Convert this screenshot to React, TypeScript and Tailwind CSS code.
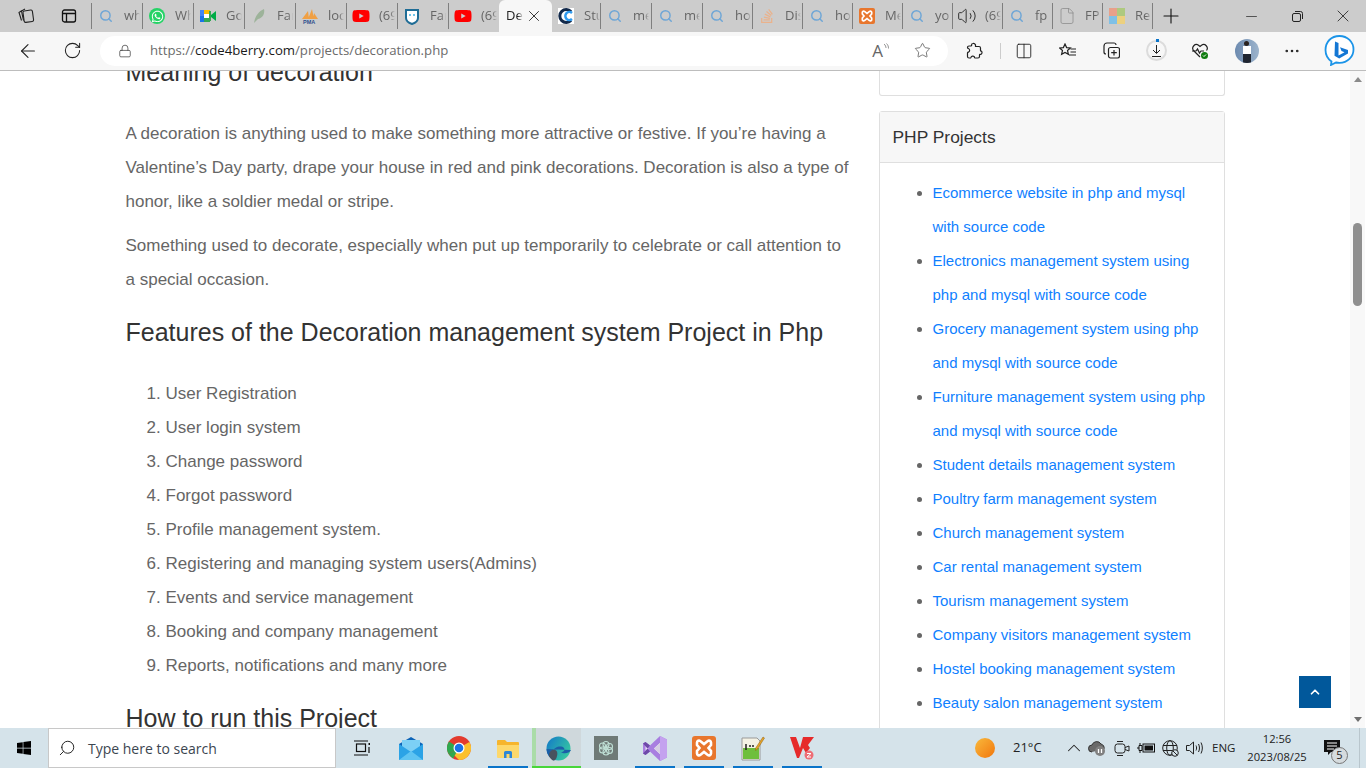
import { ReactNode } from "react";
import {
  ArrowLeft,
  ChevronUp,
  Columns2,
  File,
  Lock,
  Minus,
  MoreHorizontal,
  Plus,
  RotateCw,
  Search,
  Star,
  Volume2,
  X,
} from "lucide-react";
import { FaStackOverflow, FaWhatsapp, FaYoutube, FaWindows } from "react-icons/fa";

const SearchFav = () => <Search className="h-[14px] w-[14px] text-[#6ea6d6]" strokeWidth={2.5} />;
const YouTubeFav = () => <FaYoutube className="h-[18px] w-[18px] text-[#f00]" />;

const XamppGlyph = ({ size = 16 }: { size?: number }) => (
  <svg width={size} height={size} viewBox="0 0 24 24">
    <rect width="24" height="24" rx="3" fill="#e8762d" />
    <path
      d="M5 6.5a2 2 0 0 1 3.2-1.5L12 8l3.8-3a2 2 0 0 1 3.2 1.5V9l-2.500 3 2.500 3v2.500a2 2 0 0 1-3.200 1.500L12 16l-3.800 3A2 2 0 0 1 5 17.500V15l2.500-3L5 9Z"
      fill="none"
      stroke="#fff"
      strokeWidth="2.600"
    />
  </svg>
);

const tabs: { label: string; icon: ReactNode; w: string }[] = [
  { label: "wh", icon: <SearchFav />, w: "w-[51px]" },
  { label: "Wh", icon: <span className="flex h-[16px] w-[16px] items-center justify-center rounded-full bg-[#25d366]"><FaWhatsapp className="h-[13px] w-[13px] text-white" /></span>, w: "w-[51px]" },
  {
    label: "Go",
    icon: (
      <svg width="16" height="14" viewBox="0 0 16 14">
        <rect x="0" y="1" width="5" height="6" fill="#4285f4" />
        <rect x="0" y="7" width="5" height="6" fill="#1a73e8" />
        <rect x="4" y="1" width="6" height="4" fill="#fbbc04" />
        <rect x="4" y="9" width="6" height="4" fill="#34a853" />
        <rect x="9" y="2" width="2" height="10" fill="#34a853" />
        <path d="M11 6 16 2v10l-5-4Z" fill="#00ac47" />
        <rect x="4" y="5" width="5" height="4" fill="#fff" />
      </svg>
    ),
    w: "w-[51px]",
  },
  {
    label: "Far",
    icon: (
      <svg width="14" height="16" viewBox="0 0 14 16">
        <path d="M2 15C3 8 7 3 12 1c1 4-1 9-6 10L2 15Z" fill="#9db39a" />
      </svg>
    ),
    w: "w-[51px]",
  },
  {
    label: "loc",
    icon: (
      <svg width="18" height="16" viewBox="0 0 18 16">
        <path d="M1 11 7 3l1 8ZM7 11l4-10 2 10ZM12 11l1-6 4 6Z" fill="#f0a044" />
        <text x="2" y="15.500" fontSize="5.500" fontWeight="700" fill="#2c4f8c" fontFamily="Liberation Sans, sans-serif">PMA</text>
      </svg>
    ),
    w: "w-[51px]",
  },
  { label: "(69", icon: <YouTubeFav />, w: "w-[51px]" },
  {
    label: "Far",
    icon: (
      <svg width="14" height="17" viewBox="0 0 14 17">
        <path d="M1 2h12v8c0 3-3 5-6 6-3-1-6-3-6-6Z" fill="#fff" stroke="#1f6d96" strokeWidth="2" />
        <circle cx="5" cy="7" r="1" fill="#42b3e5" />
        <circle cx="9" cy="7" r="1" fill="#42b3e5" />
      </svg>
    ),
    w: "w-[51px]",
  },
  { label: "(69", icon: <YouTubeFav />, w: "w-[50px] border-r-0" },
];

const tabsAfter: { label: string; icon: ReactNode; w: string }[] = [
  {
    label: "Stu",
    icon: (
      <svg width="16" height="16" viewBox="0 0 16 16">
        <rect width="16" height="16" fill="#fff" />
        <path d="M13 3.500A6.500 6.500 0 1 0 13 12.500" fill="none" stroke="#12294a" strokeWidth="3" />
        <path d="M14 5A4 4 0 1 0 14 11" fill="none" stroke="#2f9bf0" strokeWidth="2.500" />
      </svg>
    ),
    w: "w-[49px]",
  },
  { label: "me", icon: <SearchFav />, w: "w-[51px]" },
  { label: "me", icon: <SearchFav />, w: "w-[51px]" },
  { label: "ho", icon: <SearchFav />, w: "w-[50px]" },
  { label: "Dis", icon: <FaStackOverflow className="h-[16px] w-[16px] text-[#eab28c]" />, w: "w-[50px]" },
  { label: "ho", icon: <SearchFav />, w: "w-[50px]" },
  { label: "Me", icon: <XamppGlyph />, w: "w-[50px]" },
  { label: "yo", icon: <SearchFav />, w: "w-[50px]" },
  { label: "(69", icon: <Volume2 className="h-[20px] w-[20px] text-[#222]" strokeWidth={1.100} />, w: "w-[50px]" },
  { label: "fp", icon: <SearchFav />, w: "w-[50px]" },
  { label: "FP", icon: <File className="h-[18px] w-[18px] text-[#8a8a8a]" strokeWidth={1} />, w: "w-[50px]" },
  {
    label: "Re",
    icon: (
      <span className="grid h-[16px] w-[16px] grid-cols-2 grid-rows-2">
        <span className="bg-[#e8a08a]" />
        <span className="bg-[#aec97f]" />
        <span className="bg-[#7fc0e6]" />
        <span className="bg-[#ecd07f]" />
      </span>
    ),
    w: "w-[50px]",
  },
];

const Tab = ({ label, icon, w }: { label: string; icon: ReactNode; w: string }) => (
  <div className={`${w} flex h-[26px] shrink-0 items-center border-r border-[#7f7f7f]`}>
    <span className="flex w-[28px] shrink-0 justify-center">{icon}</span>
    <span className="ml-[4px] w-[16px] overflow-hidden whitespace-nowrap text-[13px] text-[#666] [mask-image:linear-gradient(to_right,black_70%,transparent)]">
      {label}
    </span>
  </div>
);

const steps = [
  "User Registration",
  "User login system",
  "Change password",
  "Forgot password",
  "Profile management system.",
  "Registering and managing system users(Admins)",
  "Events and service management",
  "Booking and company management",
  "Reports, notifications and many more",
];

const projects = [
  "Ecommerce website in php and mysql with source code",
  "Electronics management system using php and mysql with source code",
  "Grocery management system using php and mysql with source code",
  "Furniture management system using php and mysql with source code",
  "Student details management system",
  "Poultry farm management system",
  "Church management system",
  "Car rental management system",
  "Tourism management system",
  "Company visitors management system",
  "Hostel booking management system",
  "Beauty salon management system",
  "Bank management system",
];

const TaskCell = ({ children, w = "w-[49px]", bar }: { children: ReactNode; w?: string; bar?: string }) => (
  <div className={`${w} relative flex h-[40px] shrink-0 items-center justify-center`}>
    {children}
    {bar && <span className={`absolute bottom-0 left-[5px] right-[4px] h-[2px] ${bar}`} />}
  </div>
);

export default function App() {
  return (
    <div className="flex h-[768px] w-[1366px] flex-col overflow-hidden bg-white font-['Liberation_Sans',sans-serif]">
      {/* tab strip */}
      <div className="flex h-[32px] shrink-0 items-center bg-[#cccccc] font-['Open_Sans',sans-serif]">
        <div className="flex w-[47px] shrink-0 justify-center pl-[5px]">
          <svg width="18" height="18" viewBox="0 0 18 18" fill="none" stroke="#222" strokeWidth="1.100">
            <rect x="6.500" y="3.500" width="9.500" height="11.500" rx="1.500" transform="rotate(-8 11 9)" />
            <path d="M5 3.500 2 5.500l2.500 8M8 2 4.500 4l2 9.500" />
          </svg>
        </div>
        <div className="flex w-[44px] shrink-0 justify-center">
          <svg width="16" height="16" viewBox="0 0 16 16" fill="none" stroke="#111" strokeWidth="1.300">
            <rect x="1.500" y="2" width="13" height="12" rx="2" />
            <path d="M1.500 5.500h13M5.500 5.500V14" />
          </svg>
        </div>
        <div className="h-[26px] w-px shrink-0 bg-[#7f7f7f]" />
        {tabs.map((t, i) => (
          <Tab key={i} {...t} />
        ))}
        <div className="flex h-[32px] w-[53px] shrink-0 items-center self-end rounded-t-[6px] bg-[#f7f7f7] pl-[7px]">
          <span className="w-[17px] overflow-hidden whitespace-nowrap text-[13px] text-[#222] [mask-image:linear-gradient(to_right,black_70%,transparent)]">
            Dec
          </span>
          <X className="ml-[2px] h-[18px] w-[18px] text-[#222]" strokeWidth={1.200} />
        </div>
        {tabsAfter.map((t, i) => (
          <Tab key={i} {...t} />
        ))}
        <Plus className="ml-[6px] h-[24px] w-[24px] text-[#111]" strokeWidth={1.100} />
        <div className="ml-auto flex items-center">
          <div className="flex w-[46px] justify-center">
            <Minus className="h-[17px] w-[17px] text-[#222]" strokeWidth={1} />
          </div>
          <div className="flex w-[46px] justify-center">
            <svg width="11" height="11" viewBox="0 0 11 11" fill="none" stroke="#222">
              <rect x="0.500" y="2.500" width="8" height="8" rx="1.500" />
              <path d="M3 0.500h5.500a2 2 0 0 1 2 2V8" />
            </svg>
          </div>
          <div className="flex w-[46px] justify-center">
            <X className="h-[20px] w-[20px] text-[#222]" strokeWidth={1} />
          </div>
        </div>
      </div>

      {/* toolbar */}
      <div className="flex h-[39px] shrink-0 items-center border-b border-[#bdbdbd] bg-[#f7f7f7] pb-[2px] pt-[1px]">
        <div className="flex w-[56px] shrink-0 justify-center">
          <ArrowLeft className="h-[22px] w-[22px] text-[#222]" strokeWidth={1.200} />
        </div>
        <div className="flex w-[32px] shrink-0 justify-center">
          <RotateCw className="h-[19px] w-[19px] text-[#222]" strokeWidth={1.300} />
        </div>
        <div className="ml-[12px] flex h-[30px] w-[848px] shrink-0 items-center rounded-full bg-white">
          <Lock className="ml-[18px] h-[14px] w-[14px] text-[#444]" strokeWidth={1.300} />
          <span className="ml-[18px] pt-[1px] font-['Open_Sans',sans-serif] text-[13.200px] text-[#6b6b6b]">
            https://<span className="text-[#1a1a1a]">code4berry.com</span>/projects/decoration.php
          </span>
          <div className="ml-auto flex items-center">
            <span className="relative mr-[31px] font-['Open_Sans',sans-serif] text-[17px] leading-[20px] text-[#666]">
              A
              <svg className="absolute -right-[7px] top-[2px]" width="7" height="8" viewBox="0 0 7 8" fill="none" stroke="#777" strokeWidth="0.800">
                <path d="M1 1c1.500 1 2 3 2 4M3.500 .5C5 2 5.500 3.500 5.500 5.500" />
              </svg>
            </span>
            <Star className="mr-[17px] h-[17px] w-[17px] text-[#555]" strokeWidth={1.100} />
          </div>
        </div>
        <div className="flex w-[52px] shrink-0 justify-center">
          <svg width="17" height="17" viewBox="0 0 17 17" fill="none" stroke="#222" strokeWidth="1.200">
            <path d="M7 1.500a2 2 0 0 1 2.500 1.500c.2 1-.5 1.500.5 1.500h3a1.500 1.500 0 0 1 1.500 1.500v2.500c0 1 .8.500 1 .7a2 2 0 0 1-1 3.300c-.7 0-1-.3-1 .5v1.500a1.500 1.500 0 0 1-1.500 1.500H9c-1 0-.3-.8-.7-1.300a2 2 0 0 0-3.300.5c-.3.500 0 .8-1 .8H3a1.500 1.500 0 0 1-1.500-1.500V11c0-1 .7-.7 1.200-1a2 2 0 0 0-.2-3.500C2 6.200 1.500 6.500 1.500 5.500a1.500 1.500 0 0 1 1.500-1.500h2c1 0 .5-.5.500-1A1.700 1.700 0 0 1 7 1.500Z" />
          </svg>
        </div>
        <div className="h-[16px] w-px shrink-0 bg-[#ccc]" />
        <div className="flex w-[46px] shrink-0 justify-center">
          <Columns2 className="h-[18px] w-[18px] text-[#222]" strokeWidth={1.200} />
        </div>
        <div className="flex w-[41px] shrink-0 justify-center">
          <svg width="18" height="16" viewBox="0 0 18 16" fill="none" stroke="#222" strokeWidth="1.200">
            <path d="m6 1 1.600 3.600 3.800.4-2.900 2.500.9 3.800L6 9.500l-3.400 1.800.9-3.800L.6 5l3.800-.4Z" />
            <path d="M11.500 6H17M11.500 9H17M10 12h7" />
          </svg>
        </div>
        <div className="flex w-[47px] shrink-0 justify-center">
          <svg width="17" height="17" viewBox="0 0 17 17" fill="none" stroke="#222" strokeWidth="1.200">
            <rect x="5.500" y="5.500" width="11" height="10.500" rx="2" />
            <path d="M11 8v5.500M8.200 10.700h5.600M13 3a2 2 0 0 0-2-2H4a3 3 0 0 0-3 3v6a2 2 0 0 0 2 2" />
          </svg>
        </div>
        <div className="flex w-[42px] shrink-0 justify-center">
          <div className="relative flex h-[21px] w-[21px] items-center justify-center rounded-full border-2 border-[#dcdcdc]">
            <svg width="11" height="12" viewBox="0 0 11 12" fill="none" stroke="#222">
              <path d="M5.500 0v8M2 5l3.500 3.500L9 5M1 11.500h9" />
            </svg>
            <span className="absolute -top-[3px] left-[8px] h-[3px] w-[3px] bg-[#0a74c9]" />
          </div>
        </div>
        <div className="flex w-[46px] shrink-0 justify-center">
          <svg width="18" height="18" viewBox="0 0 18 18">
            <path d="M9 15 2.500 8.500a3.700 3.700 0 0 1 5-5.300L9 4.500l1.500-1.300a3.700 3.700 0 0 1 5 5.300" fill="none" stroke="#222" strokeWidth="1.200" />
            <path d="M1 9h4l1.500-2 2 4 1.500-2h3" fill="none" stroke="#222" strokeWidth="1.200" />
            <circle cx="13.500" cy="13.500" r="3.500" fill="#107c10" />
            <path d="m12 13.500 1 1 2-2" fill="none" stroke="#fff" />
          </svg>
        </div>
        <div className="flex w-[46px] shrink-0 justify-center pl-[2px]">
          <div className="relative h-[24px] w-[24px] overflow-hidden rounded-full bg-gradient-to-r from-[#6d8bb0] to-[#9db4cc]">
            <span className="absolute left-[9px] top-[2px] h-[5px] w-[5px] rounded-full bg-[#2b2320]" />
            <span className="absolute left-[8px] top-[7px] h-[8px] w-[8px] bg-white" />
            <span className="absolute left-[8px] top-[15px] h-[9px] w-[8px] bg-[#1f2530]" />
          </div>
        </div>
        <div className="flex w-[46px] shrink-0 justify-center">
          <MoreHorizontal className="h-[18px] w-[18px] text-[#222]" strokeWidth={1.500} />
        </div>
        <div className="flex w-[47px] shrink-0 justify-center pl-[2px]">
          <svg width="31" height="31" viewBox="0 0 31 31">
            <path d="M15.500 1C7 1 1.500 7 1.500 15c0 5 2.500 9 6 11.500L7 30l5-2.500c1 .2 2.300.4 3.500.4 8 0 14-6 14-13.400S23.500 1 15.500 1Z" fill="#fff" stroke="#1b94e8" strokeWidth="1.800" />
            <path d="M11 6.500 14.500 8v12.500l6-3.200-3-1.400-1.500-3.700 8 2.800v3.500l-8.800 5-4.700-2.700Z" fill="#1477d4" />
          </svg>
        </div>
      </div>

      {/* page */}
      <div className="flex min-h-0 flex-1 overflow-hidden">
        <article className="ml-[125.500px] w-[724.500px] shrink-0 text-[17px] leading-[34px] text-[#666]">
          <h3 className="-mt-[16px] mb-[28px] h-[34px] text-[25px] leading-[34px] text-[#333]">Meaning of decoration</h3>
          <p className="mb-[10px]">
            A decoration is anything used to make something more attractive or festive. If you’re having a Valentine’s Day party, drape your house in red and pink decorations. Decoration is also a type of honor, like a soldier medal or stripe.
          </p>
          <p className="mb-[18px]">
            Something used to decorate, especially when put up temporarily to celebrate or call attention to a special occasion.
          </p>
          <h3 className="mb-[28px] text-[25px] leading-[34px] text-[#333]">Features of the Decoration management system Project in Php</h3>
          <ol className="mb-[18px] list-decimal pl-[40px]">
            {steps.map((s) => (
              <li key={s}>{s}</li>
            ))}
          </ol>
          <h3 className="text-[25px] leading-[34px] text-[#333]">How to run this Project</h3>
        </article>

        <aside className="ml-[29px] w-[346px] shrink-0">
          <div className="h-[25px] rounded-b-[3px] border border-t-0 border-[#dfdfdf]" />
          <div className="mt-[15px] rounded-[3px] border border-[#dfdfdf]">
            <div className="flex h-[51px] items-center border-b border-[#dfdfdf] bg-[#f7f7f7] px-[12.500px] pt-[1px] text-[17.400px] text-[#333]">
              PHP Projects
            </div>
            <ul className="list-disc py-[13px] pl-[52.500px] pr-[18px] text-[15px] leading-[34px] text-[#666]">
              {projects.map((p) => (
                <li key={p}>
                  <a className="text-[#0f7fff]">{p}</a>
                </li>
              ))}
            </ul>
          </div>
        </aside>

        <div className="relative ml-[125px] flex w-[15px] shrink-0 flex-col items-center bg-[#f8f8f8]">
          <span className="mt-[6px] h-0 w-0 border-x-[4px] border-b-[5px] border-x-transparent border-b-[#8a8a8a]" />
          <span className="mt-[141px] h-[83px] w-[9px] rounded-full bg-[#8f8f8f]" />
          <span className="mt-auto mb-[6px] h-0 w-0 border-x-[4px] border-t-[5px] border-x-transparent border-t-[#6f6f6f]" />
          <a className="absolute -left-[51px] top-[605px] flex h-[32px] w-[32px] items-center justify-center bg-[#01589b]">
            <ChevronUp className="h-[14px] w-[14px] text-white" strokeWidth={3} />
          </a>
        </div>
      </div>

      {/* taskbar */}
      <div className="flex h-[40px] shrink-0 items-center bg-[#d5e3ea]">
        <div className="flex w-[48px] shrink-0 justify-center">
          <FaWindows className="h-[16px] w-[16px] text-black" />
        </div>
        <div className="flex h-[40px] w-[288px] shrink-0 items-center border border-[#c8c8c8] bg-white pl-[9px]">
          <Search className="h-[18px] w-[18px] -scale-x-100 text-[#222]" strokeWidth={1.300} />
          <span className="ml-[12px] font-['Open_Sans',sans-serif] text-[14px] text-[#3c4650]">Type here to search</span>
        </div>
        <TaskCell w="w-[51px]">
          <svg width="16" height="16" viewBox="0 0 16 16" fill="none" stroke="#111" strokeWidth="1.200">
            <rect x="2.500" y="4" width="9" height="7.500" />
            <path d="M0 1h14M0 15h14" />
            <rect x="14.500" y="3" width="1.500" height="2" fill="#111" stroke="none" />
            <path d="M15 7v6" />
          </svg>
        </TaskCell>
        <TaskCell w="w-[48px]">
          <svg width="24" height="23" viewBox="0 0 24 23">
            <path d="M12 0 24 7v16H0V7Z" fill="#0c64b8" />
            <path d="M3 3h18v12H3Z" fill="#7cd0f5" />
            <path d="M0 7 12 15 24 7v16H0Z" fill="#2ba3e6" />
            <path d="M0 23 12 14l12 9Z" fill="#5ec4f2" />
          </svg>
        </TaskCell>
        <TaskCell w="w-[48px]">
          <svg width="24" height="24" viewBox="0 0 24 24">
            <circle cx="12" cy="12" r="12" fill="#e33b2e" />
            <path d="M12 12 1.600 18A12 12 0 0 1 2 5.500Z" fill="#2fa84f" />
            <path d="M12 12 22.400 6A12 12 0 0 1 12 24L6 18Z" fill="#fbc02d" />
            <path d="M12 12 6 22.400A12 12 0 0 1 1.600 18Z" fill="#2fa84f" />
            <circle cx="12" cy="12" r="5.500" fill="#fff" />
            <circle cx="12" cy="12" r="4.300" fill="#1a73e8" />
          </svg>
        </TaskCell>
        <TaskCell bar="bg-[#0a74c9]">
          <svg width="22" height="19" viewBox="0 0 22 19">
            <path d="M0 2a1 1 0 0 1 1-1h7l2 2h11a1 1 0 0 1 1 1v14H0Z" fill="#f6b52d" />
            <path d="M0 6h22v12a1 1 0 0 1-1 1H1a1 1 0 0 1-1-1Z" fill="#fdd86b" />
            <path d="M7 19v-5.500A1.500 1.500 0 0 1 8.500 12h5a1.500 1.500 0 0 1 1.500 1.500V19h-2.500v-4h-3v4Z" fill="#2e86d6" />
          </svg>
        </TaskCell>
        <div className="relative flex h-[40px] w-[49px] shrink-0 items-center justify-center border-l-[4px] border-[#aadca8] bg-[#cfd8dc]">
          <svg width="25" height="25" viewBox="0 0 25 25">
            <defs>
              <linearGradient id="edgeTop" x1="0" y1="0" x2="1" y2="0.600">
                <stop offset="0" stopColor="#1277c9" />
                <stop offset="1" stopColor="#35c6a2" />
              </linearGradient>
            </defs>
            <circle cx="12.500" cy="12.500" r="12" fill="url(#edgeTop)" />
            <path d="M25 14c-2 4-8 4-10 2 3 0 4-2 3-4-3-3-10-1-12 4-1 3 0 8 4 9A12 12 0 0 1 .5 13" fill="#1b5fa8" />
            <path d="M3 20c0-4 3-7 6-6 2 .5 3 3 2 6-.5 3-2 4.500-4 4.500A12 12 0 0 1 3 20Z" fill="#48525e" />
          </svg>
          <span className="absolute -left-[4px] bottom-0 right-0 h-[2px] bg-[#48d639]" />
        </div>
        <TaskCell>
          <div className="flex h-[24px] w-[24px] items-center justify-center bg-[#6f7a77]">
            <svg width="16" height="16" viewBox="0 0 16 16" fill="none" stroke="#bfe0d6" strokeWidth="1.100">
              <circle cx="8" cy="4.500" r="3" />
              <circle cx="11.500" cy="6.500" r="3" />
              <circle cx="11.500" cy="10.500" r="3" />
              <circle cx="8" cy="12" r="3" />
              <circle cx="4.500" cy="10" r="3" />
              <circle cx="4.500" cy="6" r="3" />
            </svg>
          </div>
        </TaskCell>
        <TaskCell bar="bg-[#0a74c9]">
          <svg width="24" height="25" viewBox="0 0 24 25">
            <path d="M17 0 24 3.500v18L17 25 7 15.500 2.500 19 0 17.500v-10L2.500 6 7 9.500Z" fill="#a87ee0" />
            <path d="M17 7 11 12.500 17 18Z" fill="#fff" />
            <path d="M2.500 9.500v6l3-3Z" fill="#e9dcf8" />
            <path d="M17 0 24 3.500v18L17 25Z" fill="#c4a2ef" />
            <path d="M17 7v11l-6-5.500Z" fill="#d5cde4" />
            <path d="M0 7.500 2.500 6 7 9.500 4.500 12.500ZM0 17.500 2.500 19 7 15.500 4.500 12.500Z" fill="#6d4aa8" />
          </svg>
        </TaskCell>
        <TaskCell bar="bg-[#0a74c9]">
          <XamppGlyph size={24} />
        </TaskCell>
        <TaskCell bar="bg-[#0a74c9]">
          <svg width="24" height="25" viewBox="0 0 24 25">
            <path d="M1 2h15l3 3v19H1Z" fill="#f4f2e4" stroke="#999" />
            <path d="M2 12h16v11H2Z" fill="#6fbf3c" />
            <path d="M5 8v6M8 10h2M11 10h2" stroke="#222" strokeWidth="1.500" />
            <path d="M22 1l1.500 1-7 11-2 1.500.2-2.500Z" fill="#e8a628" stroke="#8a5a10" strokeWidth="0.500" />
          </svg>
        </TaskCell>
        <TaskCell bar="bg-[#0a74c9]">
          <svg width="24" height="24" viewBox="0 0 24 24">
            <path d="M0 1h6l4 11 3-11h11l-6 8 2 3-4 5-3-5-4 10H7Z" fill="#e62a2a" />
            <circle cx="19" cy="19" r="4.500" fill="#ee6d75" />
            <path d="M17 17.500h4L17 21h4" fill="none" stroke="#fff" />
          </svg>
        </TaskCell>

        {/* tray */}
        <div className="ml-[149px] h-[20px] w-[20px] shrink-0 rounded-full bg-gradient-to-br from-[#f8b93a] to-[#f07505]" />
        <span className="ml-[18px] w-[37px] shrink-0 font-['Open_Sans',sans-serif] text-[13px] text-[#222]">21°C</span>
        <ChevronUp className="ml-[13px] h-[22px] w-[22px] shrink-0 text-[#222]" strokeWidth={1.100} />
        <div className="ml-[0px] flex w-[24px] shrink-0 justify-center">
          <svg width="18" height="16" viewBox="0 0 18 16">
            <path d="M4 12a3.500 3.500 0 0 1 0-7 5 5 0 0 1 9-1 4 4 0 0 1 3 5" fill="#6a6a6a" stroke="#333" />
            <circle cx="12" cy="11" r="5" fill="#808080" />
            <path d="M10.500 9v4M13.500 9v4" stroke="#fff" strokeWidth="1.300" />
          </svg>
        </div>
        <div className="flex w-[25px] shrink-0 justify-center">
          <svg width="16" height="17" viewBox="0 0 16 17" fill="none" stroke="#222">
            <rect x="1" y="4" width="10" height="9" rx="2.500" />
            <path d="M11 7.500 15 6v5l-4-1.500M3 1.500h6M3 15.500h6" />
          </svg>
        </div>
        <div className="flex w-[24px] shrink-0 justify-center">
          <svg width="18" height="12" viewBox="0 0 18 12">
            <rect x="6" y="2" width="11.500" height="8" fill="none" stroke="#111" />
            <rect x="7.500" y="3.500" width="8.500" height="5" fill="#111" />
            <path d="M0 6h2M2 3.500h3v5H2ZM3 1v2.500M3 8.500V11" fill="none" stroke="#111" />
          </svg>
        </div>
        <div className="flex w-[24px] shrink-0 justify-center">
          <svg width="17" height="17" viewBox="0 0 17 17" fill="none" stroke="#222">
            <circle cx="8" cy="8" r="7.300" />
            <ellipse cx="8" cy="8" rx="3.300" ry="7.300" />
            <path d="M1 5.500h14M1 10.500h14" />
            <circle cx="13" cy="13" r="3.300" fill="#d5e3ea" />
            <path d="m11 11 4 4" />
          </svg>
        </div>
        <div className="flex w-[24px] shrink-0 justify-center">
          <svg width="17" height="14" viewBox="0 0 17 14" fill="none" stroke="#222">
            <path d="M.5 4.500h3l4-3.500v12l-4-3.500h-3Z" />
            <path d="M10 4.500c.8 1.500.8 3.500 0 5M12.500 3c1.300 2.500 1.300 5.500 0 8M15 1.500c1.800 3.500 1.800 7.500 0 11" />
          </svg>
        </div>
        <span className="ml-[6px] w-[26px] shrink-0 font-['Open_Sans',sans-serif] text-[11.500px] text-[#222]">ENG</span>
        <div className="flex w-[78px] shrink-0 flex-col items-center font-['Open_Sans',sans-serif] text-[11.200px] leading-[18px] text-[#222]">
          <span>12:56</span>
          <span>2023/08/25</span>
        </div>
        <div className="relative flex w-[32px] shrink-0 justify-center">
          <svg width="16" height="16" viewBox="0 0 16 16">
            <path d="M0 0h16v12H7l-3 3v-3H0Z" fill="#111" />
            <path d="M3 3h10M3 6h10M3 9h7" stroke="#fff" />
          </svg>
          <span className="absolute left-[15px] top-[7px] flex h-[17px] w-[17px] items-center justify-center rounded-full border border-[#777] bg-[#d5dbde] font-['Open_Sans',sans-serif] text-[11px] text-[#222]">
            5
          </span>
        </div>
        <div className="ml-[11px] h-full w-px shrink-0 bg-[#b9c6cd]" />
      </div>
    </div>
  );
}
